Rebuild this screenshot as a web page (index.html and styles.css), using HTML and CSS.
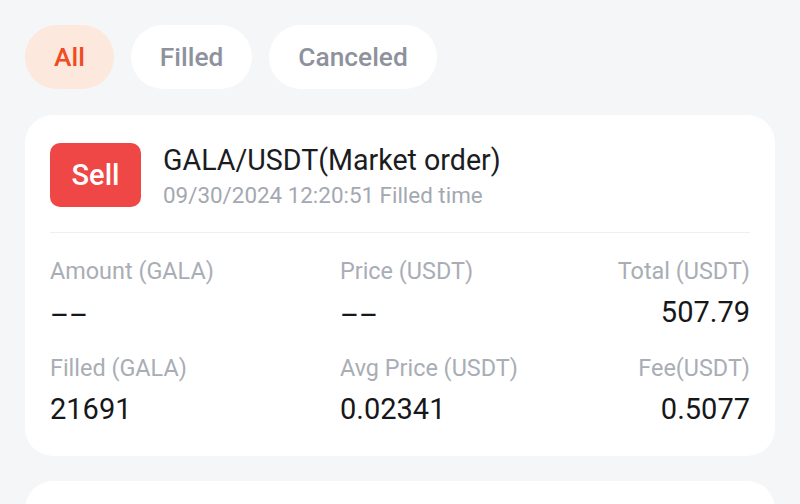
FILE: index.html
```html
<!DOCTYPE html>
<html lang="en">
<head>
<meta charset="utf-8">
<title>Orders</title>
<link rel="stylesheet" href="styles.css">
</head>
<body>
<div class="page">
  <div class="tabs">
    <div class="tab active">All</div>
    <div class="tab">Filled</div>
    <div class="tab">Canceled</div>
  </div>

  <div class="card">
    <div class="head">
      <div class="badge">Sell</div>
      <div class="head-text">
        <div class="title">GALA/USDT(Market order)</div>
        <div class="sub">09/30/2024 12:20:51 Filled time</div>
      </div>
    </div>
    <div class="divider"></div>
    <div class="grid">
      <div class="cell"><div class="label">Amount (GALA)</div><div class="value"><span class="dash">––</span></div></div>
      <div class="cell"><div class="label">Price (USDT)</div><div class="value"><span class="dash">––</span></div></div>
      <div class="cell end"><div class="label">Total (USDT)</div><div class="value">507.79</div></div>
      <div class="cell"><div class="label">Filled (GALA)</div><div class="value">21691</div></div>
      <div class="cell"><div class="label">Avg Price (USDT)</div><div class="value">0.02341</div></div>
      <div class="cell end"><div class="label">Fee(USDT)</div><div class="value">0.5077</div></div>
    </div>
  </div>

  <div class="card next"></div>
</div>
</body>
</html>
```

FILE: styles.css
```css
html, body {
  margin: 0;
  padding: 0;
  background: #f5f6f8;
  font-family: Roboto, "Noto Sans", "Liberation Sans", sans-serif;
}
.page {
  padding: 25px 25px 0;
  height: 504px;
  box-sizing: border-box;
  overflow: hidden;
}
.tabs {
  display: flex;
  gap: 17px;
}
.tab {
  height: 64px;
  line-height: 64px;
  padding: 0 29px;
  border-radius: 32px;
  background: #ffffff;
  color: #8d929d;
  font-size: 26.3px;
  font-weight: 500;
}
.tab.active {
  background: #fde8dd;
  color: #f04b22;
}
.card {
  margin-top: 26px;
  background: #ffffff;
  border-radius: 28px;
  padding: 28px 25px 30px;
}
.card.next {
  margin-top: 25px;
  height: 120px;
  padding: 0;
}
.head {
  display: flex;
  gap: 22px;
  align-items: flex-start;
}
.badge {
  width: 91px;
  height: 64px;
  border-radius: 10px;
  background: #ef4646;
  color: #ffffff;
  font-size: 29px;
  font-weight: 500;
  display: flex;
  align-items: center;
  justify-content: center;
}
.title {
  font-size: 28.6px;
  line-height: 34px;
  color: #1b1c1f;
}
.sub {
  margin-top: 4px;
  font-size: 22.4px;
  line-height: 28px;
  color: #a4a8b1;
}
.divider {
  height: 1px;
  background: #eceef1;
  margin-top: 23px;
}
.grid {
  display: grid;
  grid-template-columns: 290px 1fr 1fr;
  row-gap: 25px;
  margin-top: 24px;
}
.cell.end {
  text-align: right;
}
.label {
  font-size: 23.4px;
  line-height: 28px;
  color: #a9adb5;
}
.value {
  margin-top: 10px;
  font-size: 29px;
  line-height: 34px;
  color: #16171a;
}
.dash {
  display: inline-block;
  transform: translateY(3px);
}
```
